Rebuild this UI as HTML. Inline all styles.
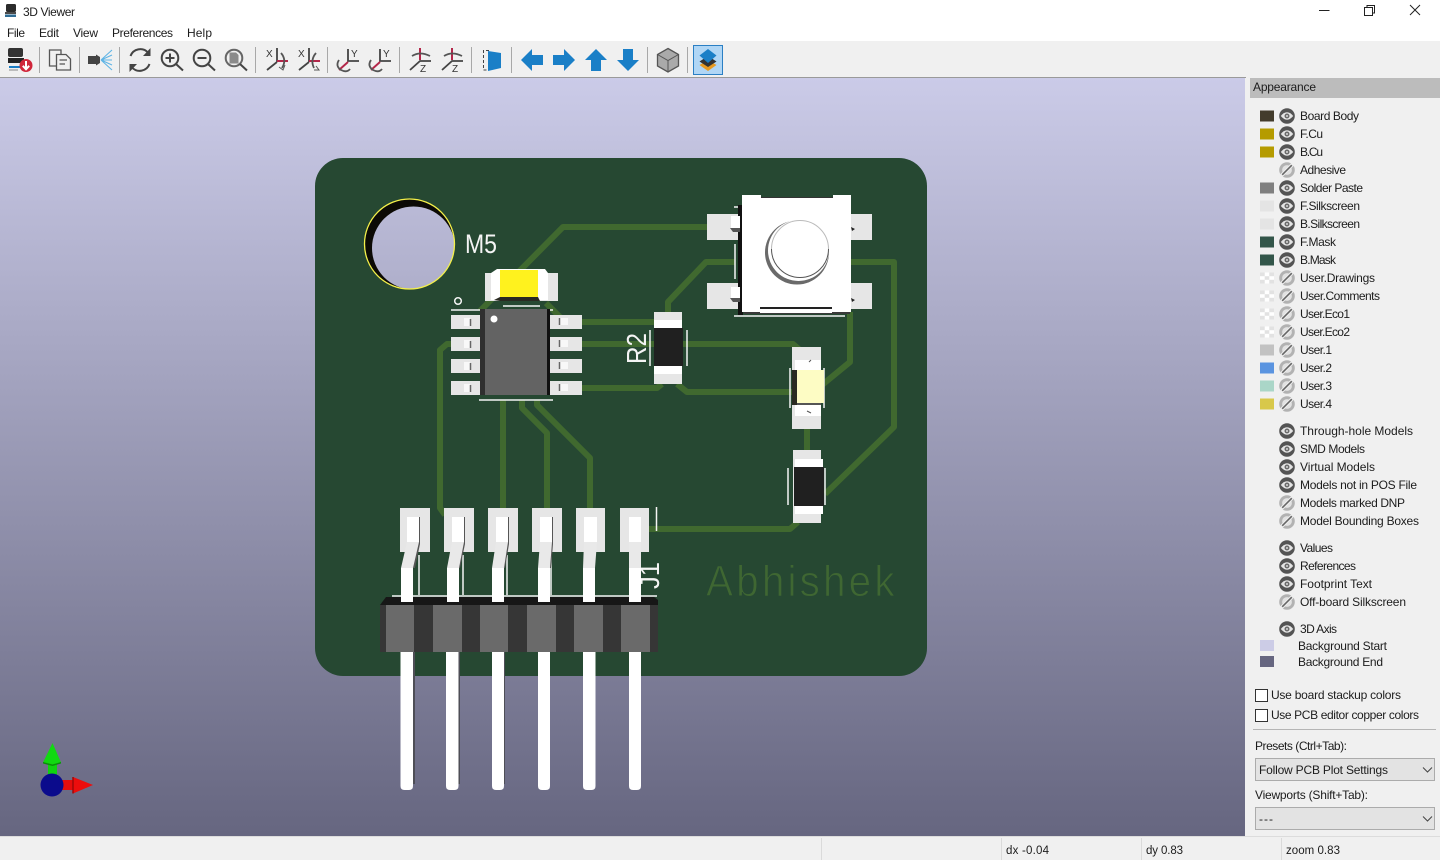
<!DOCTYPE html>
<html>
<head>
<meta charset="utf-8">
<title>3D Viewer</title>
<style>
html,body{margin:0;padding:0;width:1440px;height:860px;overflow:hidden;background:#f0f0f0}
svg{display:block;position:absolute;left:0;top:0}
text{font-family:"Liberation Sans",sans-serif;fill:#1c1c1c}
.p text{font-size:12px}
</style>
</head>
<body>
<svg width="1440" height="860" viewBox="0 0 1440 860" xmlns="http://www.w3.org/2000/svg">
<defs>
<linearGradient id="bg" gradientUnits="userSpaceOnUse" x1="0" y1="78" x2="0" y2="836">
<stop offset="0" stop-color="#cbcbe8"/><stop offset="1" stop-color="#666680"/>
</linearGradient>
<g id="eye"><circle r="7.8" fill="#545454"/><path d="M-6.2 0Q0-7.4 6.200 0Q0 7.400-6.200 0Z" fill="#e4e4e4"/><circle r="2.500" fill="#6a6a6a"/><circle r="1" fill="#d8d8d8"/></g>
<g id="off"><circle r="7.800" fill="#b2b2b2"/><circle r="4.900" fill="#e2e2e2"/><path d="M-6 6L6-6" stroke="#eeeeee" stroke-width="3.600"/><path d="M-4.800 4.800L4.800-4.800" stroke="#666" stroke-width="1.600"/></g>
<g id="chk"><rect width="14" height="11" fill="#fff"/><rect width="4.700" height="3.700" fill="#e2e2e2"/><rect x="9.300" width="4.700" height="3.700" fill="#e2e2e2"/><rect x="4.700" y="3.700" width="4.600" height="3.600" fill="#e2e2e2"/><rect y="7.300" width="4.700" height="3.700" fill="#e2e2e2"/><rect x="9.300" y="7.300" width="4.700" height="3.700" fill="#e2e2e2"/></g>
<clipPath id="holeClip"><circle cx="409.500" cy="244" r="45"/></clipPath>
</defs>

<!-- window chrome -->
<rect width="1440" height="41" fill="#fff"/>
<rect y="41" width="1440" height="36" fill="#f0f0f0"/>
<rect x="6" y="4" width="10" height="8" rx="1.500" fill="#2b2b2b"/><rect x="5" y="12" width="11" height="2" fill="#4a4a4a"/><rect x="5" y="14.500" width="11" height="2.500" fill="#2f6c94"/>
<text x="23" y="16" font-size="12" textLength="52">3D Viewer</text>
<g font-size="12">
<text x="7" y="37" textLength="18">File</text>
<text x="39" y="37" textLength="20">Edit</text>
<text x="73" y="37" textLength="25">View</text>
<text x="112" y="37" textLength="61">Preferences</text>
<text x="187" y="37" textLength="25">Help</text>
</g>
<path d="M1319 10.500H1329.500" stroke="#222" stroke-width="1"/>
<path d="M1364.500 7.500H1372.500V15.500H1364.500ZM1367 7.500V5.500H1374.500V13H1372.500" fill="none" stroke="#222" stroke-width="1"/>
<path d="M1410 5L1420 15M1420 5L1410 15" stroke="#222" stroke-width="1"/>

<!-- toolbar separators -->
<g stroke="#a8a8a8" stroke-width="1">
<path d="M39.500 47V73M79.500 47V73M119.500 47V73M255.500 47V73M327.500 47V73M399.500 47V73M471.500 47V73M511.500 47V73M647.500 47V73M687.500 47V73"/>
</g>
<!-- board icon -->
<rect x="8" y="48" width="15" height="9" rx="2" fill="#333"/><rect x="8" y="58" width="16" height="5" fill="#222"/><path d="M9 67H20" stroke="#1b7dc4" stroke-width="2"/><path d="M9 70H18" stroke="#888" stroke-width="1"/>
<circle cx="26" cy="65.500" r="6.500" fill="#d0263a"/><path d="M26 61V69M22.800 65.800L26 69.300L29.200 65.800" fill="none" stroke="#fff" stroke-width="2"/>
<!-- copy icon -->
<path d="M56 66H49.500V50H61V54M56.500 54.500H66L70.500 59V70H56.500ZM59.500 60H67M59.500 64H65" fill="none" stroke="#555" stroke-width="1.300"/>
<!-- camera -->
<path d="M88 56H96V54.500L100 57V63L96 65.500V64H88Z" fill="#444"/>
<path d="M101 60L112 50M101 60L112 55M101 60H112M101 60L112 65M101 60L112 70" stroke="#5fb4e5" stroke-width="1.100" fill="none"/>
<!-- refresh -->
<path d="M130.500 56A10.500 10.500 0 0 1 148 52.500M149.500 64A10.500 10.500 0 0 1 132 67.500" fill="none" stroke="#444" stroke-width="2"/>
<path d="M150.500 48V56H143ZM129.500 72V64H137Z" fill="#444"/>
<!-- zoom in -->
<circle cx="170" cy="58" r="8.300" fill="none" stroke="#444" stroke-width="2"/><path d="M176 64L183 70.500" stroke="#444" stroke-width="2"/><path d="M165.500 58H174.500M170 53.500V62.500" stroke="#444" stroke-width="2"/>
<!-- zoom out -->
<circle cx="202" cy="58" r="8.300" fill="none" stroke="#444" stroke-width="2"/><path d="M208 64L215 70.500" stroke="#444" stroke-width="2"/><path d="M197.500 58H206.500" stroke="#444" stroke-width="2"/>
<!-- zoom fit -->
<circle cx="234" cy="58" r="8.300" fill="none" stroke="#666" stroke-width="2"/><path d="M240 64L247 70.500" stroke="#444" stroke-width="2"/><path d="M229.500 52.500H236L238.500 55V63.500H229.500Z" fill="#8a8a8a"/>
<!-- rotate X -->
<g fill="none" stroke-width="1.800">
<path d="M277 48V62M267 70L277 62" stroke="#444"/><path d="M277 61H288" stroke="#b3274a" stroke-width="2"/><path d="M281 53Q287 60 282 68" stroke="#555"/><path d="M279 67L283 70L285 65" stroke="#555" stroke-width="1"/>
<path d="M309 48V62M299 70L309 62" stroke="#444"/><path d="M309 61H320" stroke="#b3274a" stroke-width="2"/><path d="M314 68Q310 60 316 53" stroke="#555"/><path d="M316 66L319 70L314 70" stroke="#555" stroke-width="1"/>
<!-- rotate Y -->
<path d="M348 49V61H359" stroke="#444"/><path d="M339 70L348 62" stroke="#b3274a" stroke-width="2"/><path d="M339 60Q335 66 341 70Q347 73 350 69" stroke="#555"/>
<path d="M380 49V61H391" stroke="#444"/><path d="M371 70L380 62" stroke="#b3274a" stroke-width="2"/><path d="M371 60Q367 66 373 70Q379 73 382 69" stroke="#555"/>
<!-- rotate Z -->
<path d="M431 61H420L410 70" stroke="#444"/><path d="M420 48V60" stroke="#b3274a" stroke-width="2"/><path d="M412 56Q420 51 430 56" stroke="#555"/>
<path d="M463 61H452L442 70" stroke="#444"/><path d="M452 48V60" stroke="#b3274a" stroke-width="2"/><path d="M444 56Q452 51 462 56" stroke="#555"/>
</g>
<g font-size="10">
<text x="266" y="57" style="fill:#333">X</text><text x="298" y="57" style="fill:#333">X</text>
<text x="351" y="57" style="fill:#333">Y</text><text x="383" y="57" style="fill:#333">Y</text>
<text x="420" y="72" style="fill:#333">Z</text><text x="452" y="72" style="fill:#333">Z</text>
</g>
<!-- flip -->
<path d="M489 50.500H483.500V70H489" fill="none" stroke="#444" stroke-width="1" stroke-dasharray="3 2"/>
<path d="M488 51L501 53V68L488 71Z" fill="#1a7fc7"/>
<!-- arrows -->
<g fill="#1a7fc7">
<path d="M521 60L532 49V55H543V65H532V71Z"/>
<path d="M575 60L564 49V55H553V65H564V71Z"/>
<path d="M596 49L607 60H601V71H591V60H585Z"/>
<path d="M628 71L639 60H633V49H623V60H617Z"/>
</g>
<!-- cube -->
<path d="M668 48.500L678.500 54.500V66L668 72L657.500 66V54.500Z" fill="#aaa" stroke="#555" stroke-width="1.300"/>
<path d="M657.500 54.500L668 60.500L678.500 54.500M668 60.500V72" fill="none" stroke="#555" stroke-width="1"/>
<!-- layers active -->
<rect x="693.500" y="45.500" width="29" height="29" fill="#b0d6f5" stroke="#2a7fc4"/>
<path d="M708 60L716.500 65L708 71L699.500 65Z" fill="#e79a22"/>
<path d="M708 56L716.500 61.500L708 67L699.500 61.500Z" fill="#333"/>
<path d="M708 49L716.500 55.500L708 63L699.500 55.500Z" fill="#1a7fc7"/>

<!-- canvas -->
<rect x="0" y="77" width="1246" height="1" fill="#9a9a9a"/>
<rect x="0" y="78" width="1245" height="758" fill="url(#bg)"/>

<!-- board -->
<rect x="315" y="158" width="612" height="518" rx="28" ry="28" fill="#264832"/>

<!-- hole -->
<circle cx="409.500" cy="244" r="45" fill="#0c0a05"/>
<circle cx="413.500" cy="248" r="41.500" fill="url(#bg)" clip-path="url(#holeClip)"/>
<circle cx="409.500" cy="244" r="45" fill="none" stroke="#f4f04a" stroke-width="1.300"/>

<!-- traces -->
<g fill="none" stroke="#40692f" stroke-width="6" stroke-linejoin="round">
<path d="M707 227H563L480 311"/>
<path d="M735 262H706L668 302V314"/>
<path d="M546 303L562 319"/>
<path d="M582 322H656"/>
<path d="M582 344H793L800 350"/>
<path d="M582 388H657L662 384"/>
<path d="M677 384L687 392H792"/>
<path d="M480 344H447L440 350V508L445 515"/>
<path d="M503 400V510"/>
<path d="M522 400V408L547 433V510"/>
<path d="M537 400V405L590 458V510"/>
<path d="M645 529H790L798 522"/>
<path d="M807 428V452"/>
<path d="M850 262H894V427L825 494"/>
<path d="M850 312V362L822 385"/>
</g>

<!-- pads -->
<g fill="#e6e6e6">
<rect x="451" y="315" width="29" height="14"/><rect x="451" y="337" width="29" height="14"/><rect x="451" y="359" width="29" height="14"/><rect x="451" y="381" width="29" height="14"/>
<rect x="549" y="315" width="33" height="14"/><rect x="549" y="337" width="33" height="14"/><rect x="549" y="359" width="33" height="14"/><rect x="549" y="381" width="33" height="14"/>
<rect x="485" y="273" width="73" height="28"/>
<rect x="707" y="214" width="33" height="26"/><rect x="707" y="283" width="33" height="26"/>
<rect x="850" y="214" width="22" height="26"/><rect x="850" y="283" width="22" height="26"/>
<rect x="654" y="312" width="28" height="72"/>
<rect x="792" y="347" width="29" height="82"/>
<rect x="793" y="450" width="28" height="73"/>
<rect x="400" y="508" width="30" height="44"/><rect x="444" y="508" width="30" height="44"/><rect x="488" y="508" width="30" height="44"/><rect x="532" y="508" width="30" height="44"/><rect x="576" y="508" width="29" height="44"/><rect x="620" y="508" width="29" height="44"/>
</g>

<!-- silk -->
<g stroke="#f4f4f4" stroke-width="1.500" fill="none">
<circle cx="458" cy="301" r="3.300"/>
<path d="M451 310H480M549 310H553M503 306H540M479 400H553"/>
<path d="M735 244V279M734 207H738M734 316H845"/>
<path d="M650 330V366M687 330V366"/>
<path d="M790 368V408M824 368V408"/>
<path d="M788 468V505M825 468V505"/>
<path d="M656.500 507V531"/>
<path d="M392 596H657M419 555V595M463 555V595M507 555V595M551 555V595"/>
</g>
<text x="465" y="253" font-size="27" textLength="32" lengthAdjust="spacingAndGlyphs" style="fill:#f4f4f4">M5</text>
<text transform="translate(646 364) rotate(-90)" font-size="28" textLength="31" lengthAdjust="spacingAndGlyphs" style="fill:#f4f4f4">R2</text>
<text transform="translate(659 589) rotate(-90)" font-size="27" textLength="27" lengthAdjust="spacingAndGlyphs" style="fill:#f4f4f4">J1</text>
<text transform="translate(706 596) scale(.92 1)" font-size="44" textLength="205" stroke="#264832" stroke-width="1" style="fill:#3f6732">Abhishek</text>

<!-- yellow LED -->
<path d="M491 273L497 269H545L548 273V300H491Z" fill="#fff"/>
<rect x="500" y="270" width="38" height="27" fill="#fff21e"/>
<path d="M494 300L500 297H538L540 301H500Z" fill="#2a2a22"/>

<!-- IC -->
<g fill="#f8f8f8">
<rect x="464" y="318" width="6" height="8"/><rect x="464" y="340" width="6" height="8"/><rect x="464" y="362" width="6" height="8"/><rect x="464" y="384" width="6" height="8"/>
<rect x="560" y="318" width="8" height="7"/><rect x="560" y="340" width="8" height="7"/><rect x="560" y="362" width="8" height="7"/><rect x="560" y="384" width="8" height="7"/>
</g>
<path d="M470.500 319V326M470.500 341V348M470.500 363V370M470.500 385V392M559.500 318V325M559.500 340V347M559.500 362V369M559.500 384V391" stroke="#666" stroke-width="1.500"/>
<rect x="480" y="309" width="5" height="86" fill="#2f2f2f"/>
<rect x="485" y="309" width="62" height="86" fill="#636363"/>
<rect x="547" y="309" width="3" height="86" fill="#111"/>
<circle cx="494" cy="319" r="3.500" fill="#fff"/>

<!-- switch -->
<rect x="738" y="205" width="5" height="110" fill="#111"/>
<rect x="744" y="308" width="106" height="6" fill="#3a3a3a"/>
<path d="M730 228H740V232H733Z" fill="#555"/><rect x="731" y="216" width="9" height="12" fill="#fff"/>
<path d="M730 298H740V302H733Z" fill="#555"/><rect x="731" y="287" width="9" height="11" fill="#fff"/>
<rect x="742" y="195" width="109" height="117" fill="#fff"/>
<rect x="761" y="195" width="72" height="2.500" fill="#264832"/><rect x="761" y="197" width="72" height="1" fill="#333"/>
<rect x="760" y="307" width="72" height="6" fill="#fff"/><rect x="760" y="307" width="72" height="2" fill="#222"/>
<path d="M851 227L855 229L852 231ZM851 298L855 300L852 302Z" fill="#222"/>
<circle cx="797" cy="252.500" r="32" fill="#6a6a6a"/>
<circle cx="798.500" cy="250.500" r="30.500" fill="#fff"/>
<path d="M771.500 249A28.500 28.500 0 0 0 828.500 249" fill="none" stroke="#555" stroke-width="1"/>
<path d="M771.500 249A28.500 28.500 0 0 1 828.500 249" fill="none" stroke="#bbb" stroke-width="1"/>

<!-- R2 body -->
<rect x="654" y="320" width="28" height="8" fill="#fff"/><rect x="654" y="328" width="29" height="38" fill="#202020"/><rect x="654" y="366" width="28" height="8" fill="#fff"/>

<!-- right LED -->
<rect x="795" y="360" width="26" height="10" fill="#fff"/><rect x="795" y="405" width="26" height="11" fill="#fff"/>
<rect x="792" y="370" width="5" height="35" fill="#2a2a22"/>
<rect x="797" y="370" width="27" height="33" fill="#fdfcc4"/>
<rect x="797" y="403" width="24" height="2" fill="#555"/>
<path d="M809 362L811 360M807 411L811 413" stroke="#555" fill="none"/>

<!-- lower R -->
<rect x="795" y="459" width="28" height="8" fill="#fff"/><rect x="794" y="467" width="30" height="39" fill="#202020"/><rect x="795" y="506" width="28" height="8" fill="#fff"/>

<!-- header: shadows + pins -->
<g fill="#555">
<path d="M419 517H420V544L415 568L413 568L418 544Z"/>
<path d="M464 517H465V544L460 568L458 568L463 544Z"/>
<path d="M508 517H509V544L505 568L503 568L507 544Z"/>
<path d="M552 517H553V544L551 568L549 568L551 544Z"/>
</g>
<rect x="380" y="605" width="278" height="47" fill="#363636"/>
<path d="M380 605L386 597H654L658 600V605Z" fill="#171717"/>
<g fill="#6a6a6a">
<rect x="386" y="605" width="28" height="47"/><rect x="433" y="605" width="29" height="47"/><rect x="480" y="605" width="28" height="47"/><rect x="527" y="605" width="29" height="47"/><rect x="574" y="605" width="29" height="47"/><rect x="621" y="605" width="29" height="47"/>
</g>
<g fill="#fff">
<rect x="407" y="517" width="12" height="25"/><rect x="401" y="568" width="12" height="34"/>
<rect x="452" y="517" width="12" height="25"/><rect x="447" y="568" width="12" height="34"/>
<rect x="496" y="517" width="12" height="25"/><rect x="492" y="568" width="12" height="34"/>
<rect x="540" y="517" width="12" height="25"/><rect x="538" y="568" width="12" height="34"/>
<rect x="584" y="517" width="13" height="25"/><rect x="583" y="568" width="12" height="34"/>
<rect x="629" y="517" width="12" height="25"/><rect x="629" y="568" width="12" height="34"/>
</g>
<g fill="#e9e9e9">
<path d="M407 542H419L413 568H401Z"/>
<path d="M452 542H464L459 568H447Z"/>
<path d="M496 542H508L504 568H492Z"/>
<path d="M540 542H552L550 568H538Z"/>
<path d="M584 542H597L595 568H583Z"/>
<rect x="629" y="542" width="12" height="26"/>
</g>
<!-- lower pins -->
<g fill="#4e4e56">
<rect x="412" y="652" width="3" height="132"/><rect x="457" y="652" width="3" height="132"/><rect x="503" y="652" width="2" height="132"/>
</g>
<g fill="#fff">
<path d="M400.500 652H413V786Q413 790 409 790H404.500Q400.500 790 400.500 786Z"/>
<path d="M446 652H458.500V786Q458.500 790 454.500 790H450Q446 790 446 786Z"/>
<path d="M492 652H504V786Q504 790 500 790H496Q492 790 492 786Z"/>
<path d="M538 652H550V786Q550 790 546 790H542Q538 790 538 786Z"/>
<path d="M583 652H595.500V786Q595.500 790 591.500 790H587Q583 790 583 786Z"/>
<path d="M629 652H641V786Q641 790 637 790H633Q629 790 629 786Z"/>
</g>

<!-- axis -->
<rect x="48" y="761" width="9" height="15" fill="#0fd40f"/>
<path d="M52.500 743L61 762.500L52.500 764L43 762.500Z" fill="#11d911"/>
<path d="M43 762L52.500 764.500L61 762L61 763.500L52.500 766L43 763.500Z" fill="#0a8f0a"/>
<rect x="62" y="780" width="13" height="10" fill="#e50d0d"/>
<path d="M73 777L93 785L73 793.500Z" fill="#ec0d0d"/>
<path d="M73 777V793.500" stroke="#9e0808" stroke-width="1.500"/>
<circle cx="52" cy="785" r="11.500" fill="#0b0b8c"/>

<!-- appearance panel -->
<rect x="1245" y="78" width="195" height="758" fill="#f0f0f0"/>
<rect x="1250" y="78" width="190" height="20" fill="#bcbcbc"/>
<text x="1253" y="91" font-size="12" textLength="63">Appearance</text>

<rect x="1260" y="110.500" width="14" height="11" fill="#433c2c"/>
<rect x="1260" y="128.500" width="14" height="11" fill="#b59b00"/>
<rect x="1260" y="146.500" width="14" height="11" fill="#b59b00"/>
<rect x="1260" y="182.500" width="14" height="11" fill="#808080"/>
<rect x="1260" y="200.500" width="14" height="11" fill="#e4e4e4"/>
<rect x="1260" y="218.500" width="14" height="11" fill="#e4e4e4"/>
<rect x="1260" y="236.500" width="14" height="11" fill="#33564a"/>
<rect x="1260" y="254.500" width="14" height="11" fill="#33564a"/>
<use href="#chk" x="1260" y="272.500"/><use href="#chk" x="1260" y="290.500"/><use href="#chk" x="1260" y="308.500"/><use href="#chk" x="1260" y="326.500"/>
<rect x="1260" y="344.500" width="14" height="11" fill="#c2c2c2"/>
<rect x="1260" y="362.500" width="14" height="11" fill="#5a94e0"/>
<rect x="1260" y="380.500" width="14" height="11" fill="#aad6c8"/>
<rect x="1260" y="398.500" width="14" height="11" fill="#d8c84a"/>
<rect x="1260" y="640" width="14" height="11" fill="#ccccE6"/>
<rect x="1260" y="656" width="14" height="11" fill="#666680"/>

<use href="#eye" x="1287" y="116"/><use href="#eye" x="1287" y="134"/><use href="#eye" x="1287" y="152"/><use href="#off" x="1287" y="170"/>
<use href="#eye" x="1287" y="188"/><use href="#eye" x="1287" y="206"/><use href="#eye" x="1287" y="224"/><use href="#eye" x="1287" y="242"/><use href="#eye" x="1287" y="260"/>
<use href="#off" x="1287" y="278"/><use href="#off" x="1287" y="296"/><use href="#off" x="1287" y="314"/><use href="#off" x="1287" y="332"/><use href="#off" x="1287" y="350"/><use href="#off" x="1287" y="368"/><use href="#off" x="1287" y="386"/><use href="#off" x="1287" y="404"/>
<use href="#eye" x="1287" y="431"/><use href="#eye" x="1287" y="449"/><use href="#eye" x="1287" y="467"/><use href="#eye" x="1287" y="485"/><use href="#off" x="1287" y="503"/><use href="#off" x="1287" y="521"/>
<use href="#eye" x="1287" y="548"/><use href="#eye" x="1287" y="566"/><use href="#eye" x="1287" y="584"/><use href="#off" x="1287" y="602"/>
<use href="#eye" x="1287" y="629"/>

<g class="p">
<text x="1300" y="120" textLength="59">Board Body</text>
<text x="1300" y="138" textLength="23">F.Cu</text>
<text x="1300" y="156" textLength="23">B.Cu</text>
<text x="1300" y="174" textLength="46">Adhesive</text>
<text x="1300" y="192" textLength="63">Solder Paste</text>
<text x="1300" y="210" textLength="60">F.Silkscreen</text>
<text x="1300" y="228" textLength="60">B.Silkscreen</text>
<text x="1300" y="246" textLength="36">F.Mask</text>
<text x="1300" y="264" textLength="36">B.Mask</text>
<text x="1300" y="282" textLength="75">User.Drawings</text>
<text x="1300" y="300" textLength="80">User.Comments</text>
<text x="1300" y="318" textLength="50">User.Eco1</text>
<text x="1300" y="336" textLength="50">User.Eco2</text>
<text x="1300" y="354" textLength="32">User.1</text>
<text x="1300" y="372" textLength="32">User.2</text>
<text x="1300" y="390" textLength="32">User.3</text>
<text x="1300" y="408" textLength="32">User.4</text>
<text x="1300" y="435" textLength="113">Through-hole Models</text>
<text x="1300" y="453" textLength="65">SMD Models</text>
<text x="1300" y="471" textLength="75">Virtual Models</text>
<text x="1300" y="489" textLength="117">Models not in POS File</text>
<text x="1300" y="507" textLength="105">Models marked DNP</text>
<text x="1300" y="525" textLength="119">Model Bounding Boxes</text>
<text x="1300" y="552" textLength="33">Values</text>
<text x="1300" y="570" textLength="56">References</text>
<text x="1300" y="588" textLength="72">Footprint Text</text>
<text x="1300" y="606" textLength="106">Off-board Silkscreen</text>
<text x="1300" y="633" textLength="37">3D Axis</text>
<text x="1298" y="650" textLength="89">Background Start</text>
<text x="1298" y="666" textLength="85">Background End</text>
<text x="1271" y="699" textLength="130">Use board stackup colors</text>
<text x="1271" y="719" textLength="148">Use PCB editor copper colors</text>
<text x="1255" y="750" textLength="92">Presets (Ctrl+Tab):</text>
<text x="1255" y="799" textLength="113">Viewports (Shift+Tab):</text>
</g>
<rect x="1255.500" y="689.500" width="12" height="12" fill="#fff" stroke="#333"/>
<rect x="1255.500" y="709.500" width="12" height="12" fill="#fff" stroke="#333"/>
<path d="M1253 729.500H1436" stroke="#b5b5b5"/>
<rect x="1255.500" y="758.500" width="179" height="22" fill="#e3e3e3" stroke="#ababab"/>
<text x="1259" y="774" font-size="12" textLength="129">Follow PCB Plot Settings</text>
<path d="M1423 767.500L1427.500 772L1432 767.500" fill="none" stroke="#444"/>
<rect x="1255.500" y="807.500" width="179" height="22" fill="#e3e3e3" stroke="#ababab"/>
<text x="1259" y="823" font-size="12" textLength="14">---</text>
<path d="M1423 816.500L1427.500 821L1432 816.500" fill="none" stroke="#444"/>

<!-- status bar -->
<rect y="836" width="1440" height="24" fill="#f0f0f0"/>
<path d="M0 836.500H1440" stroke="#dcdcdc"/>
<path d="M821.500 838V860M1001.500 838V860M1141.500 838V860M1281.500 838V860" stroke="#dadada"/>
<g font-size="11.500">
<text x="1006" y="854" textLength="43">dx -0.04</text>
<text x="1146" y="854" textLength="37">dy 0.83</text>
<text x="1286" y="854" textLength="54">zoom 0.83</text>
</g>
</svg>
</body>
</html>
